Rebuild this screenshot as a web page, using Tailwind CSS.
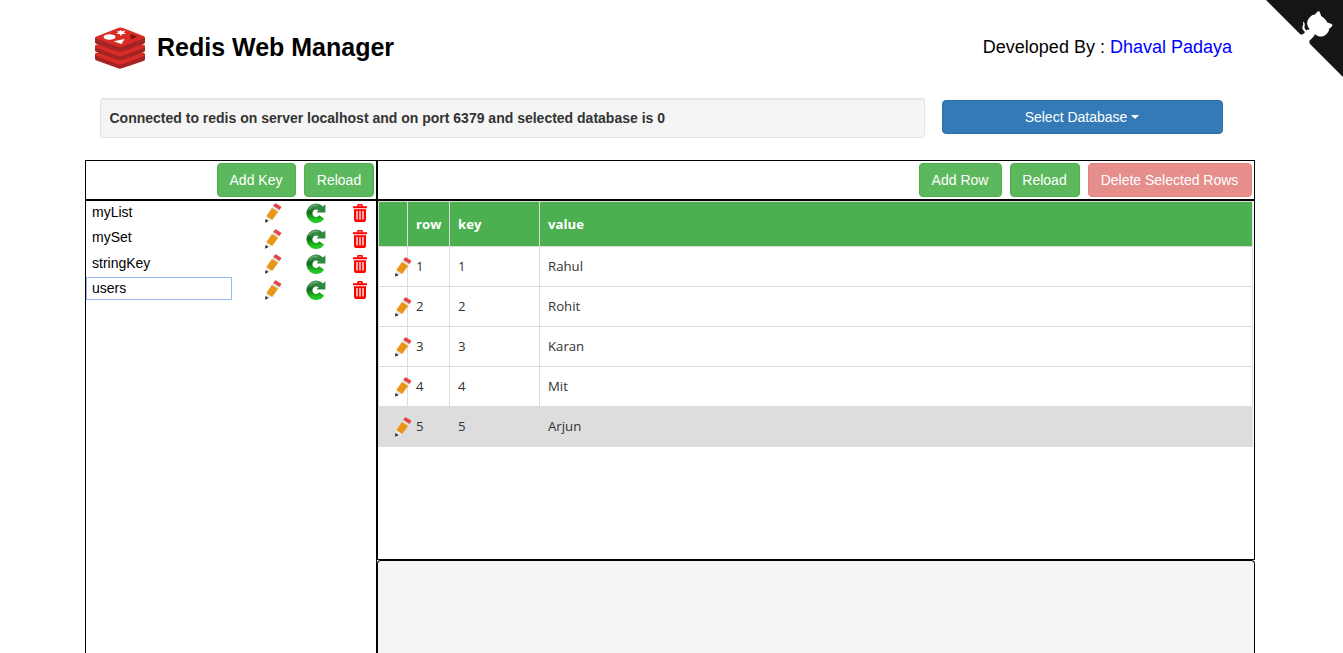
<!DOCTYPE html>
<html lang="en">
<head>
<meta charset="utf-8">
<title>Redis Web Manager</title>
<script src="https://cdn.jsdelivr.net/npm/@tailwindcss/browser@4"></script>
</head>
<body class="h-screen overflow-hidden bg-white font-['Liberation_Sans',Arial,sans-serif] text-sm leading-5 text-black">
<svg class="absolute" width="0" height="0" aria-hidden="true">
  <defs>
    <linearGradient id="green" x1="0" y1="0" x2="0" y2="1">
      <stop offset="0" stop-color="#3f8f4c"/><stop offset=".45" stop-color="#0f6a1c"/><stop offset="1" stop-color="#22c822"/>
    </linearGradient>
    <symbol id="pencil" viewBox="0 0 18 20">
      <path d="M1.400 19 2.300 13 8.200 17z" fill="#efebe8"/>
      <path d="M1 19.700 1.500 16 4.700 18z" fill="#2b2b33"/>
      <path d="M2.300 13 8 4.700 14.300 8.700 8.200 17z" fill="#ec9a1c"/>
      <path d="M4.300 14.300 10.100 6M6.300 15.700 12.200 7.300" stroke="#d08512" stroke-width=".6" fill="none"/>
      <path d="M8 4.700 9.200 3 15.500 7 14.300 8.700z" fill="#dfe6ea"/>
      <path d="M9.200 3 10.800.7Q11.400 0 12.200.4L16.900 3.400Q17.600 3.900 17.200 4.600L15.500 7z" fill="#e24646"/>
    </symbol>
    <symbol id="refresh" viewBox="0 0 20 20">
      <path d="M15.700 14A6.700 6.700 0 1 1 14.800 5.500" fill="none" stroke="url(#green)" stroke-width="6"/>
      <path d="M19.400 1.200V9.500H11.200V8.300L13.200 7.200 12.500 2 17 3.600z" fill="#2b8a3c"/>
      <path d="M3 6.500Q6 1.700 11.500 2.200" fill="none" stroke="#79b482" stroke-width="1"/>
    </symbol>
    <symbol id="trash" viewBox="0 0 14 18">
      <path d="M5 1V3M9 1V3M4.500.8H9.500" stroke="#f00" stroke-width="1.500"/>
      <path d="M0 2.200H14V4.200H0zM1 5.200H13V16.100Q13 17.900 11.300 17.900H2.700Q1 17.900 1 16.100z" fill="#f00"/>
      <path d="M4 7V15.600M7 7V15.600M10 7V15.600" stroke="#fff" stroke-width="1.300"/>
    </symbol>
  </defs>
</svg>

<a class="absolute top-0 right-0" aria-label="View source on GitHub">
  <svg width="77" height="77" viewBox="0 0 250 250">
    <path fill="#151513" d="M0,0 L250,250 L250,0 Z"/>
    <g fill="#fff" transform="translate(0 -4)">
      <path d="M128.3,109.0 C113.8,99.7 119.0,89.6 119.0,89.6 C122.0,82.7 120.5,78.6 120.5,78.6 C119.2,72.0 123.4,76.3 123.4,76.3 C127.3,80.9 125.5,87.3 125.5,87.3 C122.9,97.6 130.6,101.9 134.4,103.2"/>
      <path d="M110,118 L115.0,115.0 C114.9,115.1 118.7,116.5 119.8,115.4 L133.7,101.6 C136.9,99.2 139.9,98.4 142.2,98.6 C133.8,88.0 127.5,74.4 143.8,58.0 C148.5,53.4 154.0,51.2 159.7,51.0 C160.3,49.4 163.2,43.6 171.4,40.1 C171.4,40.1 176.1,42.5 178.8,56.2 C183.1,58.6 187.2,61.8 190.9,65.4 C194.5,69.0 197.7,73.2 200.1,77.6 C213.8,80.2 216.3,84.9 216.3,84.9 C212.7,93.1 206.9,96.0 205.4,96.6 C205.1,102.4 203.0,107.8 198.3,112.5 C181.9,128.9 168.3,122.5 157.7,114.1 C157.9,116.9 156.7,120.9 152.7,124.9 L141.0,136.5 C139.8,137.7 141.6,141.9 141.8,141.8 L140,148 Z"/>
    </g>
  </svg>
</a>

<div class="ml-[85px] flex h-full w-[1170px] flex-col">
  <header class="flex h-[98px] shrink-0 items-start justify-between pr-[23px] pl-[10px]">
    <div class="flex pt-[27px]">
      <svg width="50" height="42" viewBox="0 0 50 42">
        <path d="M0 27 25 24 50 27V32.500Q50 33.400 48.500 34L27 41.300Q25 42.200 23 41.300L1.500 33.400Q0 32.800 0 32z" fill="#a32422"/>
        <path d="M0 26.500 25 18 50 26.500Q50 28.500 48.500 29.200L27 37.200Q25 38 23 37.200L1.500 29Q0 28.400 0 26.500z" fill="#d82c27"/>
        <path d="M0 19.500H50V23.800Q50 24.600 48.500 25.300L27 33Q25 33.800 23 33L1.500 25.100Q0 24.500 0 23.800z" fill="#a32422"/>
        <path d="M0 18.200 25 10 50 18.200Q50 20 48.500 20.900L27 29Q25 29.800 23 29L1.500 20.900Q0 20.200 0 18.200z" fill="#d82c27"/>
        <path d="M0 10.500H50V15.400Q50 16.200 48.500 16.900L27 24.800Q25 25.600 23 24.800L1.500 16.900Q0 16.200 0 15.400z" fill="#a32422"/>
        <path d="M1.500 9.600 23 1Q25.500 0 28 1L48.500 9Q51 10.200 48.500 11.500L27 19.800Q25 20.600 23 19.800L1.500 11.800Q-1 10.700 1.500 9.600z" fill="#d82c27"/>
        <ellipse cx="14.500" cy="10" rx="6" ry="2.700" fill="#fff"/>
        <path d="M25 2.800 26.800 4.300 30.500 3.500 28.600 5.600 31 7 27.300 7 25.500 9 24.600 7 20.800 6.700 23.600 5.300 21.800 3.700 24.800 4.200z" fill="#fff"/>
        <path d="M18.500 14.300 29.500 12 26.500 17z" fill="#fff"/>
        <path d="M36 7V12.200L42.800 9.700z" fill="#7a1814"/>
        <path d="M36 7V12.200L35 11.800V7.500z" fill="#ad2115"/>
      </svg>
      <h1 class="ml-3 pt-[5px] text-[25px] leading-[30px] font-bold whitespace-nowrap">Redis Web Manager</h1>
    </div>
    <p class="pt-[34px] text-[18px] leading-[26px] whitespace-nowrap">Developed By : <span class="text-[#00f]">Dhaval Padaya</span></p>
  </header>

  <div class="flex h-[62px] shrink-0 items-start gap-[17px] pl-[15px]">
    <div class="h-10 w-[825px] rounded-[3px] border border-[#e3e3e3] bg-[#f5f5f5] px-[8.500px] py-[9px] font-bold text-[#333] shadow-[inset_0_1px_1px_rgba(0,0,0,0.05)]">Connected to redis on server localhost and on port 6379 and selected database is 0</div>
    <button class="mt-[2px] flex h-[34px] w-[281px] items-center justify-center gap-1 rounded border border-[#2e6da4] bg-[#337ab7] pr-px text-white">Select Database<span class="size-0 border-x-4 border-t-4 border-x-transparent border-t-white"></span></button>
  </div>

  <main class="flex min-h-0 grow">
    <section class="flex w-[292px] flex-col">
      <div class="flex h-10 shrink-0 justify-end gap-2 border border-black px-[2px] pt-[2px]">
        <button class="h-[34px] w-[79px] rounded border border-[#4cae4c] bg-[#5cb85c] pr-px text-white">Add Key</button>
        <button class="h-[34px] w-[70px] rounded border border-[#4cae4c] bg-[#5cb85c] text-white">Reload</button>
      </div>
      <div class="grow border border-b-0 border-black" id="keys"></div>
    </section>
    <section class="flex w-[878px] flex-col">
      <div class="flex h-10 shrink-0 justify-end gap-2 border border-black pt-[2px] pr-[2px]">
        <button class="h-[34px] w-[83px] rounded border border-[#4cae4c] bg-[#5cb85c] pr-px text-white">Add Row</button>
        <button class="h-[34px] w-[70px] rounded border border-[#4cae4c] bg-[#5cb85c] pr-px text-white">Reload</button>
        <button class="h-[34px] w-[164px] rounded border border-[#d43f3a] bg-[#d9534f] pr-px text-white opacity-65">Delete Selected Rows</button>
      </div>
      <div class="h-[360px] shrink-0 border border-black">
        <div class="w-[875px] border-r border-b border-[#ddd] font-['Open_Sans','Noto_Sans',sans-serif] text-[13.200px] text-[#333]" id="rows">
          <div class="grid h-[45px] grid-cols-[29px_42px_90px_1fr] bg-[#4caf50] text-[13.200px] font-bold text-white">
            <div class="border-t border-l border-[#ddd]"></div>
            <div class="border-t border-l border-[#ddd] pt-[11.500px] pl-2">row</div>
            <div class="border-t border-l border-[#ddd] pt-[11.500px] pl-2">key</div>
            <div class="border-t border-l border-[#ddd] pt-[11.500px] pl-2">value</div>
          </div>
        </div>
      </div>
      <div class="grow rounded-t border border-b-0 border-black bg-[#f5f5f5]"></div>
    </section>
  </main>
</div>

<script>
  document.getElementById('keys').innerHTML = ['myList', 'mySet', 'stringKey', 'users'].map(name => `
    <div class="flex h-[25.500px]">
      <div class="-mt-[0.250px] h-[23px] w-[146px] shrink-0 border pl-[5px] leading-[21px] ${name === 'users' ? 'border-[#96b9f8]' : 'border-transparent'}">${name}</div>
      <svg class="mt-[2px] ml-[32px] h-5 w-[18px] shrink-0"><use href="#pencil"/></svg>
      <svg class="mt-[2px] ml-[24px] size-5 shrink-0"><use href="#refresh"/></svg>
      <svg class="mt-[3px] ml-[27px] h-[18px] w-[14px] shrink-0"><use href="#trash"/></svg>
    </div>`).join('');
  document.getElementById('rows').insertAdjacentHTML('beforeend', ['Rahul', 'Rohit', 'Karan', 'Mit', 'Arjun'].map((value, i) => `
    <div class="grid h-10 grid-cols-[29px_42px_90px_1fr] ${i === 4 ? 'bg-[#ddd]' : 'bg-white'}">
      <div class="relative z-10 border-t border-l border-[#ddd] pt-[10px] pl-[15px]"><svg class="h-5 w-[18px] max-w-none"><use href="#pencil"/></svg></div>
      <div class="border-t border-l border-[#ddd] pt-[9px] pl-2">${i + 1}</div>
      <div class="border-t border-l border-[#ddd] pt-[9px] pl-2">${i + 1}</div>
      <div class="border-t border-l border-[#ddd] pt-[9px] pl-2">${value}</div>
    </div>`).join(''));
</script>
</body>
</html>
